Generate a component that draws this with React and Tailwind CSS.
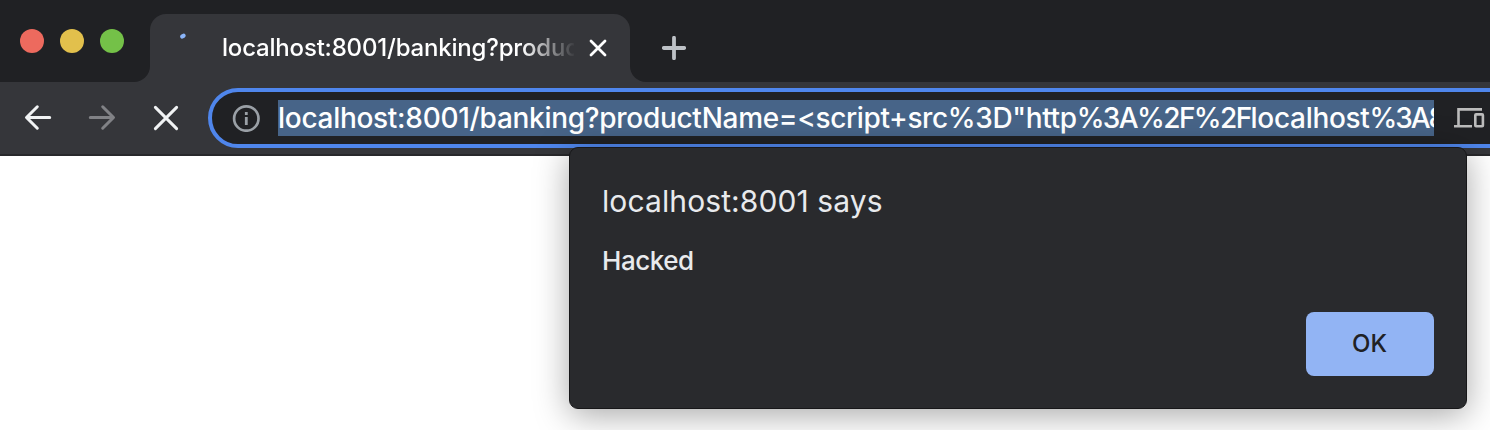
function WindowControls() {
  return (
    <div className="flex h-full w-[150px] shrink-0 gap-4 rounded-br-[16px] bg-[#202124] pt-[29px] pl-5">
      <span className="size-6 rounded-full bg-[#ed6a5e]" />
      <span className="size-6 rounded-full bg-[#e2c04c]" />
      <span className="size-6 rounded-full bg-[#74c148]" />
    </div>
  );
}

function TabStrip() {
  return (
    <div className="flex h-[82px] bg-[#35363a]">
      <WindowControls />
      <div className="h-full w-[480px] shrink-0 bg-[#202124] pt-[14px]">
        <div className="flex h-[68px] items-center rounded-t-[16px] bg-[#35363a]">
          <svg className="ml-[24px] size-[32px] shrink-0" viewBox="0 0 32 32">
            <path d="M8.2 4.6L9.6 3.7" stroke="#8ab4f8" strokeWidth="4.2" strokeLinecap="round" />
          </svg>
          <span className="ml-[16px] w-[352px] overflow-hidden text-[24px] leading-8 font-[450] tracking-[-0.19px] whitespace-nowrap text-white [mask-image:linear-gradient(to_right,black_300px,transparent_354px)]">
            localhost:8001/banking?produc
          </span>
          <svg className="ml-[14px] size-[20px] shrink-0" viewBox="0 0 20 20" fill="none">
            <path d="M3 3L17 17M17 3L3 17" stroke="#fff" strokeWidth="2.8" strokeLinecap="round" />
          </svg>
        </div>
      </div>
      <div className="h-full flex-1 rounded-bl-[16px] bg-[#202124] pt-[36px] pl-[32px]">
        <svg className="size-6" viewBox="0 0 24 24" fill="none">
          <path d="M12 1.8V22.2M1.8 12H22.2" stroke="#bdc1c6" strokeWidth="3.8" strokeLinecap="round" />
        </svg>
      </div>
    </div>
  );
}

function AddressBar() {
  return (
    <div className="flex h-[60px] w-[1330px] shrink-0 items-center rounded-full border-4 border-[#4f86ec] bg-[#202124]">
      <svg className="ml-[20px] size-[28px] shrink-0" viewBox="0 0 28 28" fill="none">
        <circle cx="14.3" cy="14.5" r="12.2" stroke="#9aa0a6" strokeWidth="2.7" />
        <path d="M14.3 13V21M14.3 8V11" stroke="#9aa0a6" strokeWidth="2.8" />
      </svg>
      <div className="ml-[18px] h-9 w-[1156px] shrink-0 overflow-hidden bg-[#476488] text-[28px] leading-9 font-[450] whitespace-nowrap text-white">
        <span className="tracking-[-0.29px]">localhost:8001/banking?productName=</span>
        <span className="tracking-[-0.38px]">&lt;script+src%3D"http</span>
        <span className="tracking-[-1.6px]">%3A%2F%2F</span>
        <span className="tracking-[-0.3px]">localhost</span>
        <span className="tracking-[-2.1px]">%3A8</span>
      </div>
      <svg className="ml-[20px] size-[32px] shrink-0" viewBox="0 0 32 32" fill="none" stroke="#bcbcbc" strokeWidth="2.6">
        <path d="M28 7.4H4.5V24M0 24.2H18" />
        <rect x="21.3" y="12.4" width="7.6" height="11.8" rx="0.8" />
      </svg>
    </div>
  );
}

function Toolbar() {
  return (
    <div className="flex h-[74px] overflow-hidden border-b-2 border-[#28282b] bg-[#35363a] pt-[6px]">
      <div className="flex h-[60px] w-[208px] shrink-0 items-center gap-8 pl-[22px]">
        <svg className="size-8" viewBox="0 0 32 32" fill="none" stroke="#f1f3f4" strokeWidth="3" strokeLinecap="round" strokeLinejoin="round">
          <path d="M27.7 15.5H5M15.3 4.8L4.5 15.5L15.3 26.2" />
        </svg>
        <svg className="size-8" viewBox="0 0 32 32" fill="none" stroke="#818286" strokeWidth="3" strokeLinecap="round" strokeLinejoin="round">
          <path d="M4.3 15.5H27M16.7 4.8L27.5 15.5L16.7 26.2" />
        </svg>
        <svg className="size-8" viewBox="0 0 32 32" fill="none" stroke="#f1f3f4" strokeWidth="3" strokeLinecap="round">
          <path d="M5.4 5.4L26.6 26.6M26.6 5.4L5.4 26.6" />
        </svg>
      </div>
      <AddressBar />
    </div>
  );
}

function AlertDialog() {
  return (
    <div className="absolute top-[147px] left-[569px] flex h-[262px] w-[898px] flex-col rounded-[9px] border border-[#171719] bg-[#292a2d] px-8 pt-[33px] text-[#e8eaed] shadow-[0_6px_34px_rgba(0,0,0,0.35)]">
      <h1 className="text-[30px] leading-10 tracking-[0.1px]">localhost:8001 says</h1>
      <p className="mt-[22px] text-[26px] leading-9 font-[450] tracking-[-0.45px]">Hacked</p>
      <button className="mt-[33px] h-16 w-32 self-end rounded-lg bg-[#92b4f4] pr-px text-[24px] font-medium text-[#202124]">
        OK
      </button>
    </div>
  );
}

export default function App() {
  return (
    <div className="relative h-[430px] w-[1490px] overflow-hidden bg-white font-['Inter','Liberation_Sans',sans-serif]">
      <TabStrip />
      <Toolbar />
      <AlertDialog />
    </div>
  );
}
